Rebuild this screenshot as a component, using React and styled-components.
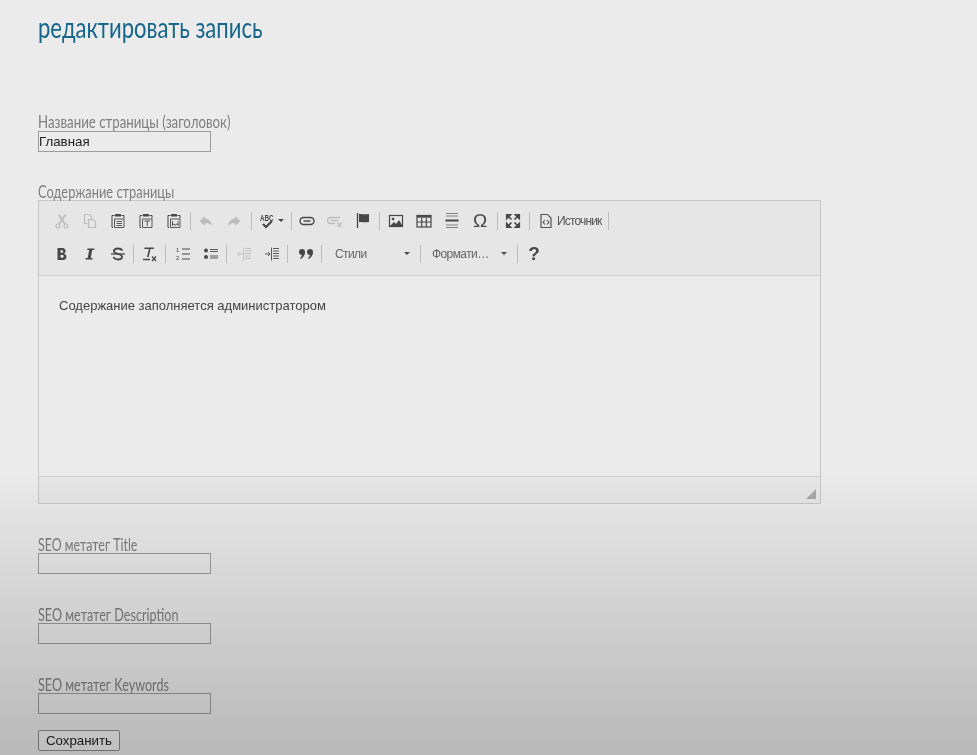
import React from 'react'
import styled, { createGlobalStyle } from 'styled-components'

const GlobalStyle = createGlobalStyle`
  html, body {
    margin: 0;
    padding: 0;
    background: #ebebeb;
  }
  body {
    height: 755px;
    overflow: hidden;
  }
`

// the reference is a soft video frame, so the whole page gets a slight blur
const Page = styled.div`
  position: relative;
  height: 755px;
  overflow: hidden;
  padding: 0 38px;
  box-sizing: border-box;
  filter: blur(0.4px);
`

// darkening that lies over the lower part of the page
const BottomShade = styled.div`
  position: absolute;
  left: 0;
  right: 0;
  bottom: 0;
  height: 285px;
  background: linear-gradient(to bottom, rgba(0, 0, 0, 0), rgba(0, 0, 0, 0.09) 40%, rgba(0, 0, 0, 0.21));
  pointer-events: none;
`

const Heading = styled.h1`
  margin: 0;
  padding-top: 10px;
  height: 112px;
  box-sizing: border-box;
  font-family: Lato, 'Open Sans', sans-serif;
  font-size: 28px;
  line-height: 34px;
  font-weight: 400;
  color: #15668c;
  white-space: nowrap;
  transform: scaleX(0.787);
  transform-origin: left top;
`

const Field = styled.div`
  height: ${(p) => p.$height || 70}px;
`

const Label = styled.label`
  display: block;
  height: ${(p) => p.$height || 18}px;
  font-family: Lato, 'Open Sans', sans-serif;
  font-size: 18px;
  line-height: 19px;
  color: #7e7e7e;
  white-space: nowrap;
  transform: scaleX(${(p) => p.$scale});
  transform-origin: left top;
`

const TextInput = styled.input`
  display: block;
  width: 173px;
  height: 21px;
  margin: 0;
  padding: 0;
  box-sizing: border-box;
  background: transparent;
  border: 1px solid #9c9c9c;
  font-family: 'Liberation Sans', sans-serif;
  font-size: 13.3px;
  color: #222;
  outline: none;
`

const Editor = styled.div`
  width: 783px;
  height: 304px;
  box-sizing: border-box;
  border: 1px solid #c6c6c6;
  display: flex;
  flex-direction: column;
`

const Toolbar = styled.div`
  height: 75px;
  box-sizing: border-box;
  border-bottom: 1px solid #cdcdcd;
  background: #e6e6e6;
  padding: 3px 0 0 9px;
`

const ToolRow = styled.div`
  display: flex;
  align-items: center;
  height: 33px;
`

const ToolButton = styled.span`
  width: ${(p) => p.$width || 28}px;
  height: 28px;
  flex: none;
  display: flex;
  align-items: center;
  justify-content: center;
  gap: 3px;
  color: ${(p) => (p.$off ? '#bcbcbc' : '#474747')};
`

const Sep = styled.span`
  width: 1px;
  height: 18px;
  flex: none;
  background: #bcbcbc;
  margin: 0 ${(p) => p.$r ?? 1}px 0 ${(p) => p.$l ?? 1}px;
`

const Caret = styled.span`
  width: 0;
  height: 0;
  flex: none;
  border-left: 3px solid transparent;
  border-right: 3px solid transparent;
  border-top: 3px solid #474747;
`

const SourceButton = styled.span`
  display: flex;
  align-items: center;
  gap: 3px;
  width: 77px;
  padding-left: 7px;
  box-sizing: border-box;
  flex: none;
  color: #555;
  font-family: 'Liberation Sans', sans-serif;
  font-size: 12px;
  letter-spacing: -0.85px;
`

const Combo = styled.span`
  width: ${(p) => p.$width}px;
  height: 28px;
  flex: none;
  display: flex;
  align-items: center;
  justify-content: space-between;
  padding: 0 9px 0 ${(p) => p.$pad}px;
  box-sizing: border-box;
  font-family: 'Liberation Sans', sans-serif;
  font-size: 12px;
  letter-spacing: -0.6px;
  color: #666;
`

const Content = styled.div`
  flex: 1;
  padding: 21px 20px 0;
  font-family: 'Liberation Sans', sans-serif;
  font-size: 13px;
  line-height: 17px;
  color: #444;
`

const EditorFooter = styled.div`
  height: 27px;
  box-sizing: border-box;
  border-top: 1px solid #cdcdcd;
  background: #e6e6e6;
  display: flex;
  justify-content: flex-end;
  align-items: flex-end;
  padding: 0 4px 4px 0;
`

const SaveButton = styled.button`
  display: block;
  width: 82px;
  height: 21px;
  margin: 0;
  padding: 0;
  box-sizing: border-box;
  background: #f2f2f2;
  border: 1px solid #8c8c8c;
  border-radius: 2px;
  font-family: 'Liberation Sans', sans-serif;
  font-size: 13.3px;
  color: #222;
`

const Icon = ({ children, size = 16 }) => (
  <svg width={size} height={size} viewBox="0 0 16 16" fill="none" stroke="currentColor" strokeWidth="1.2">
    {children}
  </svg>
)

const Cut = () => (
  <Icon>
    <circle cx="4" cy="13" r="2" />
    <circle cx="12" cy="13" r="2" />
    <path d="M5 11 11.5 1.5M11 11 4.5 1.5" strokeWidth="1.8" />
  </Icon>
)
const Copy = () => (
  <Icon>
    <path d="M2.5 1.5h5l2 2v3M2.5 1.5v9h3" />
    <path d="M6.5 6.5h4.500l2.500 2.500v5.500h-7z" />
  </Icon>
)
const Paste = ({ children }) => (
  <Icon>
    <path d="M4.500 2.500H2v12h1" strokeWidth="1" />
    <path d="M11.500 2.500H14v3" strokeWidth="1" />
    <path d="M5 1h6v2.500H5z" fill="currentColor" stroke="none" />
    <path d="M4.500 6h9.500v8.500H4.500z" strokeWidth=".9" />
    {children}
  </Icon>
)
const Undo = () => (
  <Icon>
    <path d="M7 3 1.5 8 7 13V10c3 0 5 .7 7 3-.5-4-3-7-7-7.500z" fill="currentColor" stroke="none" />
  </Icon>
)
const Redo = () => (
  <Icon>
    <path d="M9 3l5.500 5L9 13V10c-3 0-5 .7-7 3 .5-4 3-7 7-7.500z" fill="currentColor" stroke="none" />
  </Icon>
)
const Spell = () => (
  <Icon>
    <text transform="translate(1 8) scale(.7 1)" fontFamily="Liberation Sans, sans-serif" fontSize="9" fontWeight="700" fill="currentColor" stroke="none">ABC</text>
    <path d="M4 11l3 3 6-6" strokeWidth="2.200" />
  </Icon>
)
const LinkIcon = () => (
  <Icon>
    <rect x="1" y="4.500" width="14" height="7" rx="3.500" strokeWidth="1.400" />
    <path d="M4.500 8h7" strokeWidth="1.400" />
  </Icon>
)
const Unlink = () => (
  <Icon>
    <path d="M13 4.500H3.500a3 3 0 0 0 0 6H8" strokeWidth="1.300" />
    <path d="M4 7.500h7" strokeWidth="1.300" />
    <path d="M10.500 9.500l4 4.500M14.500 9.500l-4 4.500" />
  </Icon>
)
const Flag = () => (
  <Icon>
    <path d="M2.500 0v15" strokeWidth="1.300" />
    <path d="M4 1c3-.5 5 1 10 0v8c-5 1-7-.5-10 0z" fill="currentColor" stroke="none" />
  </Icon>
)
const ImageIcon = () => (
  <Icon>
    <rect x="1.500" y="2.500" width="13" height="11" />
    <circle cx="5" cy="6" r="1.300" fill="currentColor" stroke="none" />
    <path d="M2 13l4-4 2 2 3-4 3.500 6z" fill="currentColor" stroke="none" />
  </Icon>
)
const TableIcon = () => (
  <Icon>
    <rect x="1" y="2.500" width="14" height="11.500" />
    <path d="M1 3.500h14" strokeWidth="2.400" />
    <path d="M1 9h14M5.700 5v9M10.300 5v9" />
  </Icon>
)
const Rule = () => (
  <Icon>
    <path d="M2 .5h12M2 3h12M2 12h12M2 14.500h12" strokeWidth=".9" opacity=".7" />
    <path d="M1.500 7.500h13" strokeWidth="2" />
  </Icon>
)
const Maximize = () => (
  <Icon>
    <path d="M1.500 1.500h4.500L1.500 6zM14.500 1.500H10L14.500 6zM1.500 14.500H6L1.500 10zM14.500 14.500H10l4.500-4.500z" fill="currentColor" />
    <path d="M3 3l3.500 3.500M13 3 9.500 6.500M3 13l3.500-3.500M13 13 9.500 9.500" strokeWidth="1.600" />
  </Icon>
)
const SourceIcon = () => (
  <Icon>
    <path d="M3 1.500h6.500l3.500 3.500v9.500H3z" />
    <path d="M7 7 5 9.200 7 11.500M9 7l2 2.200-2 2.300" strokeWidth="1.100" />
  </Icon>
)
const Bold = () => (
  <Icon>
    <path d="M3.500 2h5c3.800 0 4 5 1 5.700 4 .3 4 6.300-.5 6.300H3.500zM6.500 4.300v2.500h1.700c1.400 0 1.400-2.500 0-2.500zM6.500 9v2.700h2c1.600 0 1.600-2.700 0-2.700z" fill="currentColor" stroke="none" fillRule="evenodd" />
  </Icon>
)
const Italic = () => (
  <Icon>
    <path d="M5.500 2.500h7l-.3 1.500h-2l-1.500 8h2l-.3 1.500h-7l.3-1.500h2l1.500-8h-2z" fill="currentColor" stroke="none" />
  </Icon>
)
const Strike = () => (
  <Icon>
    <path d="M12.500 4.500C11.500 3 10 2.500 8 2.500c-3 0-4.500 1.500-4 3 .5 2 3 2 4.500 2.500 2.500.7 4 1.500 3.500 3.500-.5 1.500-2 2-4 2-2.200 0-3.700-.7-4.500-2.500" strokeWidth="1.800" />
    <path d="M1 8h14" strokeWidth="1.300" />
  </Icon>
)
const ClearFormat = () => (
  <Icon>
    <path d="M3.500 1.500h9.500l-.3 1.500H9.500l-1.800 8H6l1.800-8H3.200z" fill="currentColor" stroke="none" />
    <path d="M2 13.500h7" strokeWidth="1.500" />
    <path d="M11 10.500l4 4.500M15 10.500l-4 4.500" strokeWidth="1.300" />
  </Icon>
)
const NumberedList = () => (
  <Icon>
    <path d="M7 3h8M7 8h8M7 13h8" />
    <text x="1" y="6" fontFamily="Liberation Sans, sans-serif" fontSize="6" fill="currentColor" stroke="none">1</text>
    <text x="1" y="14" fontFamily="Liberation Sans, sans-serif" fontSize="6" fill="currentColor" stroke="none">2</text>
  </Icon>
)
const BulletList = () => (
  <Icon>
    <circle cx="3" cy="4.500" r="2" fill="currentColor" stroke="none" />
    <circle cx="3" cy="11" r="2" fill="currentColor" stroke="none" />
    <path d="M7 3.500h8M7 5.500h8M7 10h8M7 12h8" strokeWidth=".9" />
  </Icon>
)
const Outdent = () => (
  <Icon>
    <path d="M7.500 1.500v13" strokeWidth=".9" />
    <path d="M9 2.500h6M9 5h6M9 7.500h6M9 10h6M9 12.500h6" strokeWidth=".9" />
    <path d="M6.500 8H1.500M3.500 6 1.500 8l2 2" strokeWidth=".9" />
  </Icon>
)
const Indent = () => (
  <Icon>
    <path d="M7.500 1.500v13" strokeWidth=".9" />
    <path d="M9 2.500h6M9 5h6M9 7.500h6M9 10h6M9 12.500h6" strokeWidth=".9" />
    <path d="M1 8h5M4 6l2 2-2 2" strokeWidth=".9" />
  </Icon>
)
const Quote = () => (
  <Icon>
    <circle cx="4" cy="6" r="3" fill="currentColor" stroke="none" />
    <circle cx="12" cy="6" r="3" fill="currentColor" stroke="none" />
    <path d="M6.900 6.500C6.800 9.500 5 12 2.500 13l-.5-1c1.400-.8 2-2.500 2-4zM14.900 6.500c-.1 3-1.900 5.500-4.400 6.500l-.5-1c1.400-.8 2-2.500 2-4z" fill="currentColor" stroke="none" />
  </Icon>
)
const Glyph = styled.span`
  font-family: ${(p) => (p.$serif ? "'Liberation Serif', serif" : "'Liberation Sans', sans-serif")};
  font-size: ${(p) => p.$size}px;
  font-weight: ${(p) => p.$weight || 400};
  line-height: 1;
  color: #474747;
`

const PlainLine = ({ d }) => <path d={d} strokeWidth=".9" />

const App = () => (
  <Page>
    <GlobalStyle />
    <Heading>редактировать запись</Heading>
    <Field $height={70}>
      <Label $scale={0.737} $height={19}>Название страницы (заголовок)</Label>
      <TextInput defaultValue="Главная" />
    </Field>
    <Label $scale={0.715}>Содержание страницы</Label>
    <Editor>
      <Toolbar>
        <ToolRow>
          <ToolButton $off><Cut /></ToolButton>
          <ToolButton $off><Copy /></ToolButton>
          <ToolButton><Paste><PlainLine d="M6.500 8.500h5.500M6.500 10.500h5.500M6.500 12.500h5.500" /></Paste></ToolButton>
          <ToolButton><Paste><PlainLine d="M6.500 8h5.500M9.250 8v5" /></Paste></ToolButton>
          <ToolButton><Paste><PlainLine d="M6.500 8v4.500l1.400-1.700 1.400 1.700 1.400-1.700 1.400 1.700V8" /></Paste></ToolButton>
          <Sep $l={2} />
          <ToolButton $off><Undo /></ToolButton>
          <ToolButton $off><Redo /></ToolButton>
          <Sep $l={3} $r={0} />
          <ToolButton $width={38}><Spell /><Caret /></ToolButton>
          <Sep />
          <ToolButton><LinkIcon /></ToolButton>
          <ToolButton $off><Unlink /></ToolButton>
          <ToolButton><Flag /></ToolButton>
          <Sep $l={2} $r={2} />
          <ToolButton><ImageIcon /></ToolButton>
          <ToolButton><TableIcon /></ToolButton>
          <ToolButton><Rule /></ToolButton>
          <ToolButton><Glyph $size={19}>Ω</Glyph></ToolButton>
          <Sep $l={3} />
          <ToolButton><Maximize /></ToolButton>
          <Sep $l={2} />
          <SourceButton><SourceIcon />Источник</SourceButton>
          <Sep $l={0} />
        </ToolRow>
        <ToolRow>
          <ToolButton><Bold /></ToolButton>
          <ToolButton><Italic /></ToolButton>
          <ToolButton><Strike /></ToolButton>
          <Sep />
          <ToolButton><ClearFormat /></ToolButton>
          <Sep $l={2} $r={3} />
          <ToolButton><NumberedList /></ToolButton>
          <ToolButton><BulletList /></ToolButton>
          <Sep $r={3} />
          <ToolButton $off><Outdent /></ToolButton>
          <ToolButton><Indent /></ToolButton>
          <Sep $r={4} />
          <ToolButton><Quote /></ToolButton>
          <Sep />
          <Combo $width={96} $pad={12}>Стили<Caret /></Combo>
          <Sep />
          <Combo $width={94} $pad={10}>Формати…<Caret /></Combo>
          <Sep $r={2} />
          <ToolButton><Glyph $size={19} $weight={700}>?</Glyph></ToolButton>
        </ToolRow>
      </Toolbar>
      <Content>Содержание заполняется администратором</Content>
      <EditorFooter>
        <svg width="10" height="10" viewBox="0 0 10 10">
          <path d="M10 0v10H0z" fill="#a9a9a9" />
        </svg>
      </EditorFooter>
    </Editor>
    <Field $height={31} />
    <Field>
      <Label $scale={0.69}>SEO метатег Title</Label>
      <TextInput />
    </Field>
    <Field>
      <Label $scale={0.7}>SEO метатег Description</Label>
      <TextInput />
    </Field>
    <Field $height={55}>
      <Label $scale={0.7}>SEO метатег Keywords</Label>
      <TextInput />
    </Field>
    <SaveButton>Сохранить</SaveButton>
    <BottomShade />
  </Page>
)

export default App
